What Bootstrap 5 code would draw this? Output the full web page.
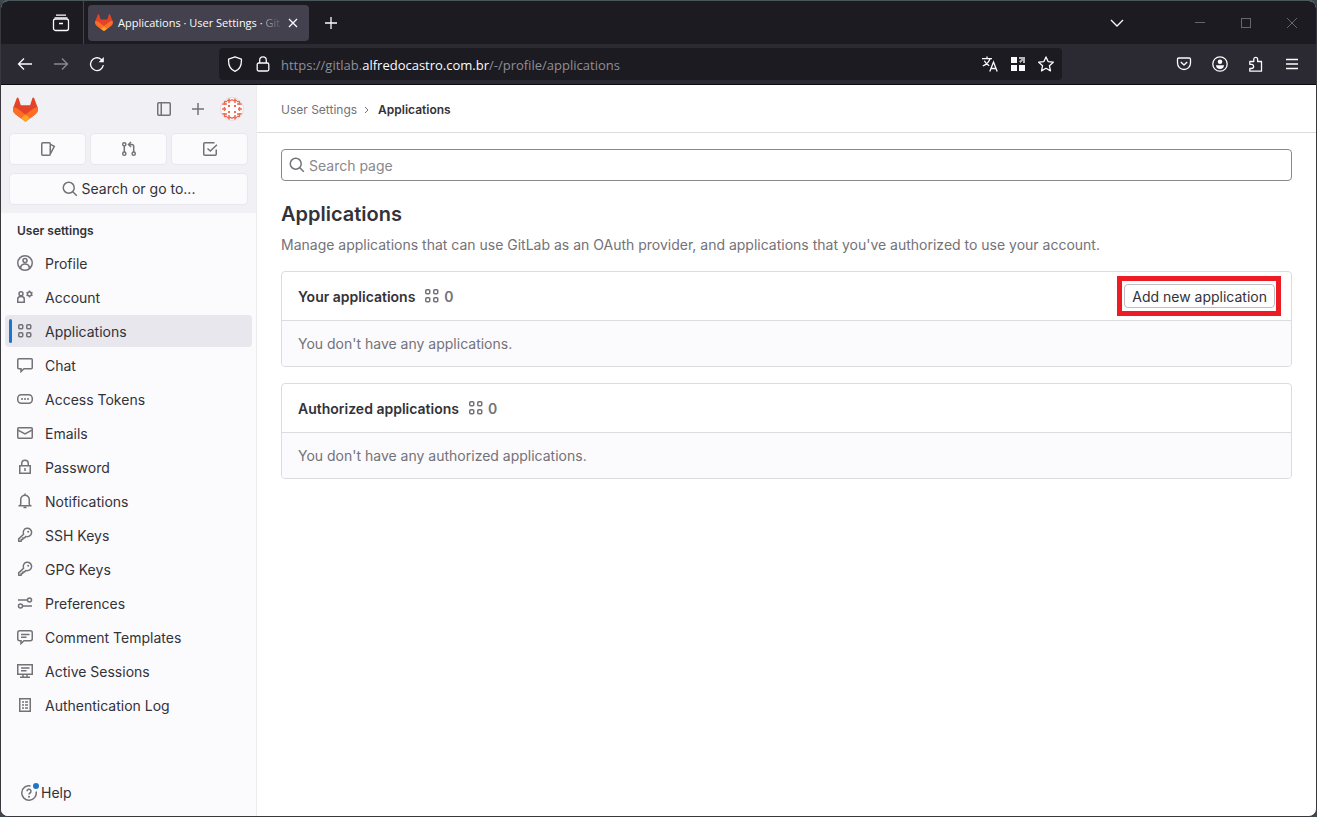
<!DOCTYPE html>
<html lang="en">
<head>
<meta charset="utf-8">
<meta name="viewport" content="width=device-width, initial-scale=1">
<title>Applications · User Settings · GitLab</title>
<link href="https://cdn.jsdelivr.net/npm/bootstrap@5.3.0/dist/css/bootstrap.min.css" rel="stylesheet">
<style>
  body { background: #3c4a50; font-family: Inter, "Liberation Sans", sans-serif; font-size: 14px; line-height: 20px; color: #333238; }
  svg { display: block; flex: none; fill: none; stroke: currentColor; stroke-width: 1.5; }
  button { font: inherit; color: inherit; }
  a { color: inherit; text-decoration: none; }
  .win { min-height: 100vh; border: 1px solid #38383d; border-top-color: #4a585c; border-radius: 8px; overflow: hidden; background: #fff; }

  .chrome-ui { font-family: "Open Sans", "Noto Sans", sans-serif; color: #fbfbfe; }
  .chrome-ui button { background: none; border: 0; padding: 0; }
  .chrome-ui svg { stroke-width: 1.3; }
  .tab-strip { height: 43px; background: #1c1b22; }
  .all-tabs { width: 83px; border-right: 1px solid #45444d; padding-left: 51px; }
  .page-tab { width: 221px; height: 36px; margin-left: 4px; padding: 0 11px 0 7px; background: #42414d; border-radius: 4px; font-size: 11px; }
  .tab-title { margin-left: 5px; white-space: nowrap; }
  .fade-end { background: linear-gradient(90deg, #b0afb6, #5c5b66); -webkit-background-clip: text; background-clip: text; color: transparent; }
  .win-ctl { gap: 30px; color: #67666e; }
  .win-ctl svg { stroke-width: 1; }
  .nav-strip { height: 41px; background: #2b2a33; border-bottom: 1px solid #0c0c0d; padding-left: 16px; padding-right: 16px; }
  .nav-left { width: 202px; gap: 20px; }
  .addr { width: 843px; height: 32px; background: #1c1b22; border-radius: 4px; padding: 0 8px; }
  .addr-text { font-size: 13px; color: #8f8f96; padding-top: 1px; margin-left: 6px; }
  .addr-text b { font-weight: 400; color: #fbfbfe; }

  .side { width: 256px; background: #fbfafd; border-right: 1px solid #ececef; }
  .side-top { background: #f1f0f4; padding: 8px; height: 128px; }
  .brand-row { height: 32px; }
  .ico { color: #737278; }
  .tile { height: 32px; background: #fbfafd; border: 1px solid #e8e7ed; border-radius: 4px; display: flex; align-items: center; justify-content: center; padding: 0; }
  .side-title { font-size: 12px; font-weight: 600; line-height: 16px; padding: 10px 16px 8px; }
  .side-nav { padding: 0 4px; display: grid; gap: 2px; list-style: none; margin: 0; }
  .side-nav a { height: 32px; display: flex; align-items: center; gap: 12px; padding: 0 12px; border-radius: 4px; }
  .side-nav a.active { background: #e8e7ed; padding-left: 4px; gap: 5px; }
  .side-nav a.active::before { content: ""; width: 3px; height: 24px; border-radius: 4px; background: #1f75cb; }
  .side-nav a span { padding-top: 2px; }
  .side-nav a.active span { padding-left: 7px; }
  .side-nav a svg { color: #737278; }

  .crumbs { height: 48px; border-bottom: 1px solid #dcdcde; padding: 2px 24px 0; font-size: 12px; }
  .crumbs b { font-weight: 600; }
  .crumbs svg { stroke-width: 1; margin: 0 9px 0 7px; }
  .work { padding: 16px 24px; }
  .page-search { height: 32px; border: 1px solid #89888d; border-radius: 4px; padding: 0 7px; gap: 4px; }
  .page-search input { border: 0; outline: 0; width: 100%; background: none; padding: 2px 0 0; }
  .page-search input::placeholder { color: #89888d; opacity: 1; }
  h1 { font-size: 20px; line-height: 24px; font-weight: 600; margin: 21px 0 9px; }
  .soft { color: #737278; }
  .panel { border: 1px solid #dcdcde; border-radius: 4px; margin-bottom: 16px; overflow: hidden; }
  .panel-head { height: 49px; padding: 0 10px 0 16px; border-bottom: 1px solid #dcdcde; }
  .panel-head h2 { font-size: 14px; line-height: 20px; font-weight: 600; margin: 0; padding-top: 2px; }
  .total { gap: 4px; margin-left: 9px; font-weight: 600; }
  .total span { padding-top: 2px; }
  .panel-body { background: #fbfafd; padding: 13px 16px 12px; }
  .callout-box { border: 5px solid #ed1c24; padding: 3px 1px 3px 2px; }
  .btn-add { height: 24px; border: 1px solid #bfbfc3; border-radius: 4px; background: #fff; padding: 2px 7px 0; line-height: 20px; display: block; }
  .help { padding: 0 20px 13px; }
  .help-dot { top: -2px; right: -2px; width: 6px; height: 6px; border-radius: 50%; background: #1f75cb; }
</style>
</head>
<body>
<svg width="0" height="0" class="position-absolute" aria-hidden="true">
  <symbol id="fox" viewBox="0 0 25 24"><g stroke="none"><path fill="#e24329" d="m24.5 9.5-.03-.09L21.08.56a.9.9 0 0 0-1.7.09l-2.29 7.01H7.83L5.54.65a.9.9 0 0 0-1.7-.09L.45 9.4l-.03.1a6.3 6.3 0 0 0 2.09 7.27l5.2 3.9 2.56 1.93 2.2 1.66 4.77-3.61 5.2-3.9A6.3 6.3 0 0 0 24.5 9.5Z"/><path fill="#fc6d26" d="m24.5 9.5-.03-.09a11.4 11.4 0 0 0-4.56 2.05l-7.45 5.63 4.75 3.58 5.2-3.9A6.3 6.3 0 0 0 24.5 9.5ZM.42 9.5l.03-.09a11.4 11.4 0 0 1 4.56 2.05l7.45 5.63-4.75 3.58-5.2-3.9A6.3 6.3 0 0 1 .42 9.5Z"/><path fill="#fca326" d="m7.7 20.67 4.77 3.59 4.74-3.59-4.75-3.58-4.76 3.58Z"/></g></symbol>
  <symbol id="apps" viewBox="0 0 16 16"><rect x="1.750" y="1.750" width="4" height="4" rx="1"/><rect x="9.750" y="1.750" width="4" height="4" rx="1"/><rect x="1.750" y="9.750" width="4" height="4" rx="1"/><rect x="9.750" y="9.750" width="4" height="4" rx="1"/></symbol>
  <symbol id="find" viewBox="0 0 16 16"><circle cx="6.750" cy="6.750" r="5.500"/><path d="m10.800 10.800 4 4"/></symbol>
  <symbol id="key" viewBox="0 0 16 16"><path d="M6.600 7.200A4.200 4.200 0 1 1 9 9.400L7.500 10.900H5.800v1.700H4.200v1.700H1.700v-2.400Z" stroke-linejoin="round"/><circle cx="11.200" cy="4.800" r="1" fill="currentColor" stroke="none"/></symbol>
</svg>

<div class="win d-flex flex-column">
  <header class="chrome-ui">
    <div class="tab-strip d-flex align-items-center">
      <div class="all-tabs align-self-stretch d-flex align-items-center">
        <button aria-label="Recent tabs"><svg width="18" height="18" viewBox="0 0 18 18"><path d="M4 1.200h10M2.500 3.800h13"/><rect x="1.500" y="5" width="15" height="11.500" rx="2"/><path d="M7 9.500h4"/></svg></button>
      </div>
      <div class="page-tab d-flex align-items-center">
        <svg width="18" height="17"><use href="#fox"/></svg>
        <span class="tab-title">Applications · User Settings · <span class="fade-end">Git</span></span>
        <button aria-label="Close tab" class="ms-auto"><svg width="10" height="10" viewBox="0 0 10 10"><path d="m1 1 8 8M9 1 1 9"/></svg></button>
      </div>
      <button aria-label="New tab" class="ms-3"><svg width="12" height="12" viewBox="0 0 12 12"><path d="M6 0v12M0 6h12"/></svg></button>
      <button aria-label="List all tabs" class="ms-auto"><svg width="14" height="8" viewBox="0 0 14 8"><path d="m1 1 6 6 6-6"/></svg></button>
      <div class="win-ctl d-flex align-items-center ms-5 ps-3 pe-3">
        <button aria-label="Minimize" class="ms-1"><svg width="16" height="10" viewBox="0 0 16 10"><path d="M3 4.500h10"/></svg></button>
        <button aria-label="Maximize"><svg width="16" height="10" viewBox="0 0 16 10"><rect x="3.500" y=".500" width="9" height="9"/></svg></button>
        <button aria-label="Close"><svg width="16" height="10" viewBox="0 0 16 10"><path d="m3 0 10 10M13 0 3 10"/></svg></button>
      </div>
    </div>
    <div class="nav-strip d-flex align-items-center">
      <div class="nav-left d-flex align-items-center">
        <button aria-label="Back"><svg width="16" height="16" viewBox="0 0 16 16"><path d="M15 8H1.500M7 2.500 1.500 8 7 13.500"/></svg></button>
        <button aria-label="Forward" disabled><svg width="16" height="16" viewBox="0 0 16 16" opacity=".45"><path d="M1 8h13.500M9 2.500 14.500 8 9 13.500"/></svg></button>
        <button aria-label="Reload"><svg width="16" height="16" viewBox="0 0 16 16"><path d="M14.300 9A6.400 6.400 0 1 1 12 3.200L13.500 4.700"/><path d="M14.800 1v5.200H9.600Z" fill="currentColor" stroke="none"/></svg></button>
      </div>
      <div class="addr d-flex align-items-center">
        <button aria-label="Tracking protection"><svg width="16" height="16" viewBox="0 0 16 16"><path d="M8 .800 14.400 3.200C14.800 9 12 13.600 8 15.300 4 13.600 1.200 9 1.600 3.200Z" stroke-linejoin="round"/></svg></button>
        <button aria-label="Connection secure" class="ms-2 px-1"><svg width="16" height="16" viewBox="0 0 16 16"><rect x="2.200" y="7" width="11.600" height="8" rx="1.500"/><path d="M4.700 7V4.200a3.300 3.300 0 0 1 6.600 0V7"/></svg></button>
        <a class="addr-text text-nowrap" href="#">https://gitlab.<b>alfredocastro.com.br</b>/-/profile/applications</a>
        <div class="d-flex gap-2 ms-auto">
          <button aria-label="Translate" class="pe-1"><svg width="16" height="16" viewBox="0 0 16 16"><path d="M0 2.700h10M5 .500v2.200M8 2.700C7 6 4 8.500.800 10M2.300 4.800c1.200 2.400 3 3.800 4.900 5M7.800 15.500l3.700-9.500 3.700 9.500M9 12.500h5"/></svg></button>
          <button aria-label="Containers" class="pe-1"><svg width="16" height="16" viewBox="0 0 16 16"><path d="M1 1h6v6H1zM1 9h6v6H1zM9 9h6v6H9z" fill="currentColor" stroke="none"/><path d="M9 1h6v6h-2V4.500L10.500 7 9 5.500 11.500 3H9z" fill="#b5b5ba" stroke="none"/></svg></button>
          <button aria-label="Bookmark"><svg width="16" height="16" viewBox="0 0 16 16"><path d="m8 .900 2.100 4.700 5.200.600-3.900 3.500 1.100 5.200L8 12.300l-4.500 2.600 1.100-5.200L.700 6.200l5.200-.600Z" stroke-linejoin="round"/></svg></button>
        </div>
      </div>
      <div class="d-flex align-items-center gap-3 ms-auto">
        <button aria-label="Pocket" class="pe-1"><svg width="16" height="16" viewBox="0 0 16 16"><path d="M2.800 2h10.400q1.300 0 1.300 1.300V7a6.500 6.500 0 0 1-13 0V3.300Q1.500 2 2.800 2ZM4.800 6 8 9l3.200-3" stroke-linejoin="round"/></svg></button>
        <button aria-label="Account" class="pe-1"><svg width="16" height="16" viewBox="0 0 16 16"><circle cx="8" cy="8" r="7.200"/><circle cx="8" cy="5.800" r="2.300" fill="currentColor" stroke="none"/><path d="M4 9.200h8c0 2-1.600 3.800-4 3.800s-4-1.800-4-3.800Z" fill="currentColor" stroke="none"/></svg></button>
        <button aria-label="Extensions" class="pe-1"><svg width="16" height="16" viewBox="0 0 16 16"><path d="M1.800 8.300V5.500H5.800V3.200a1.900 1.900 0 0 1 3.800 0v2.300h3.900v9.700H1.800v-2.700H3.500a2.100 2.100 0 0 0 0-4.200Z" stroke-linejoin="round"/></svg></button>
        <button aria-label="Menu"><svg width="16" height="16" viewBox="0 0 16 16"><path d="M2 3.500h12M2 8h12M2 12.500h12"/></svg></button>
      </div>
    </div>
  </header>

  <div class="d-flex flex-grow-1">
    <aside class="side d-flex flex-column flex-shrink-0">
      <div class="side-top">
        <div class="brand-row d-flex align-items-center px-1 mb-2">
          <a href="#" aria-label="Homepage"><svg width="25" height="25"><use href="#fox"/></svg></a>
          <div class="d-flex align-items-center ms-auto gap-3 ico">
            <button class="btn p-0 border-0 ico me-1" aria-label="Collapse sidebar"><svg width="16" height="16" viewBox="0 0 16 16"><rect x="1.750" y="1.750" width="12.500" height="12.500" rx="1"/><path d="M5.250 2v12"/></svg></button>
            <button class="btn p-0 border-0 ico" aria-label="Create new"><svg width="12" height="12" viewBox="0 0 12 12"><path d="M6 0v12M0 6h12"/></svg></button>
            <a href="#" aria-label="User menu"><svg width="24" height="24" viewBox="0 0 24 24"><defs><clipPath id="av"><circle cx="12" cy="12" r="11.500"/></clipPath></defs><g clip-path="url(#av)"><path fill="#fff" stroke="none" d="M0 0h24v24H0z"/><path stroke="#ee6a50" stroke-width="1.500" d="M4.500 5v3M4.500 10v4M4.500 16v3M19.500 5v3M19.500 10v4M19.500 16v3M9 1v5M15 1v5M9 18v5M15 18v5M12 2v2M12 20v2M2 7h5M2 12h4M2 17h5M17 7h5M18 12h4M17 17h5M7 3.500h4M13 3.500h4M7 20.500h4M13 20.500h4M4 4.500h3M17 4.500h3M4 19.500h3M17 19.500h3"/><path fill="#ee6a50" stroke="none" d="M8 8h2v2H8zM14 8h2v2h-2zM8 14h2v2H8zM14 14h2v2h-2z"/></g><circle cx="12" cy="12" r="11.500" stroke="#dddce2" stroke-width="1"/></svg></a>
          </div>
        </div>
        <div class="row g-0 gap-1 flex-nowrap mb-2">
          <div class="col"><a class="tile ico" href="#" aria-label="Issues"><svg width="16" height="16" viewBox="0 0 16 16"><rect x="1.750" y="1.750" width="8.500" height="12.500" rx="1"/><path d="m10.500 3.300 3.800 2-3.800 7.400"/></svg></a></div>
          <div class="col"><a class="tile ico" href="#" aria-label="Merge requests"><svg width="16" height="16" viewBox="0 0 16 16"><circle cx="3.300" cy="3.300" r="1.600"/><circle cx="3.300" cy="12.700" r="1.600"/><circle cx="12.700" cy="12.700" r="1.600"/><path d="M3.300 5v6M12.700 11V5.500q0-2-2-2H8M10 1 7.500 3.500 10 6"/></svg></a></div>
          <div class="col"><a class="tile ico" href="#" aria-label="To-Do List"><svg width="16" height="16" viewBox="0 0 16 16"><path d="M12.500 1.750H2.750q-1 0-1 1v10.500q0 1 1 1h10.500q1 0 1-1V8.500M5.500 7.500 8.300 10l6.700-6.200"/></svg></a></div>
        </div>
        <button class="tile w-100 gap-1"><svg class="ico" width="16" height="16"><use href="#find"/></svg>Search or go to...</button>
      </div>
      <div class="side-title">User settings</div>
      <ul class="side-nav">
        <li><a href="#"><svg width="16" height="16" viewBox="0 0 16 16"><circle cx="8" cy="8" r="7.250"/><circle cx="8" cy="5.500" r="2"/><path d="M3.700 13.500v-1.500q.800-3 4.300-3t4.300 3v1.500"/></svg><span>Profile</span></a></li>
        <li><a href="#"><svg width="16" height="16" viewBox="0 0 16 16"><circle cx="4" cy="4.800" r="2"/><path d="M.750 13.250V10Q.750 7.500 4 7.500T7.250 10v3.250Z"/><circle cx="12.500" cy="5" r="2"/><path d="M12.500 1.500v1.500M12.500 7v1.500M9.500 3.300l1.300.700M14.200 6l1.300.700M9.500 6.700l1.300-.700M14.200 4l1.300-.700"/></svg><span>Account</span></a></li>
        <li><a href="#" class="active" aria-current="page"><svg width="16" height="16"><use href="#apps"/></svg><span>Applications</span></a></li>
        <li><a href="#"><svg width="16" height="16" viewBox="0 0 16 16"><path d="M1.750 1.750h12.500q1 0 1 1v8q0 1-1 1H7l-3 2.800v-2.800H1.750q-1 0-1-1v-8q0-1 1-1Z"/></svg><span>Chat</span></a></li>
        <li><a href="#"><svg width="16" height="16" viewBox="0 0 16 16"><rect x=".750" y="3.750" width="14.500" height="8.500" rx="3.500"/><path d="M4 8h2M7 8h2M10 8h2"/></svg><span>Access Tokens</span></a></li>
        <li><a href="#"><svg width="16" height="16" viewBox="0 0 16 16"><rect x=".750" y="2.750" width="14.500" height="10.500" rx="1"/><path d="M1 5.200 8 9l7-3.800"/></svg><span>Emails</span></a></li>
        <li><a href="#"><svg width="16" height="16" viewBox="0 0 16 16"><rect x="2.750" y="6.750" width="10.500" height="7.500"/><path d="M4.750 6.500V4.500a3.250 3.250 0 0 1 6.500 0v2M8 9v3"/></svg><span>Password</span></a></li>
        <li><a href="#"><svg width="16" height="16" viewBox="0 0 16 16"><path d="M1.500 12.750h13M3 12.500l.750-1.500V6.500a4.250 4.250 0 0 1 8.500 0V11l.750 1.500M8 .500V2M6.500 14.500h3"/></svg><span>Notifications</span></a></li>
        <li><a href="#"><svg width="16" height="16"><use href="#key"/></svg><span>SSH Keys</span></a></li>
        <li><a href="#"><svg width="16" height="16"><use href="#key"/></svg><span>GPG Keys</span></a></li>
        <li><a href="#"><svg width="16" height="16" viewBox="0 0 16 16"><circle cx="12.500" cy="5" r="2"/><circle cx="3.500" cy="11" r="2"/><path d="M1 5h9.500M5.500 11H15"/></svg><span>Preferences</span></a></li>
        <li><a href="#"><svg width="16" height="16" viewBox="0 0 16 16"><path d="M2.750 1.750h10.500q2 0 2 2v6q0 2-2 2H7l-3 2.800v-2.800H2.750q-2 0-2-2v-6q0-2 2-2ZM4 5.500h8.500M4 8.200h5.500"/></svg><span>Comment Templates</span></a></li>
        <li><a href="#"><svg width="16" height="16" viewBox="0 0 16 16"><path d="M.750 1.750h14.500v9.500H.750ZM4 5h8.500M4 7.800h5.500M3 14.250h10M6 11.500v2.500M10 11.500v2.500"/></svg><span>Active Sessions</span></a></li>
        <li><a href="#"><svg width="16" height="16" viewBox="0 0 16 16"><path d="M2.750 1.750h10.500v12.500H2.750ZM5 5h2M8 5h3M5 8h2M8 8h3M5 11h2M8 11h3"/></svg><span>Authentication Log</span></a></li>
      </ul>
      <a class="help d-flex align-items-center gap-1 mt-auto" href="#">
        <span class="position-relative ico"><svg width="16" height="16" viewBox="0 0 16 16"><path d="M9.500 .900A7.250 7.250 0 1 0 15.100 6.500"/><path d="M6 6.300a2 2 0 1 1 3 1.700q-1 .600-1 1.500"/><circle cx="8" cy="11.700" r="1" fill="currentColor" stroke="none"/></svg><span class="help-dot position-absolute"></span></span>Help
      </a>
    </aside>

    <main class="flex-grow-1">
      <nav class="crumbs d-flex align-items-center" aria-label="Breadcrumb">
        <a class="soft" href="#">User Settings</a>
        <svg class="ico" width="5" height="8" viewBox="0 0 5 8"><path d="m1 1 3 3-3 3"/></svg>
        <b>Applications</b>
      </nav>
      <div class="work">
        <label class="page-search d-flex align-items-center"><svg class="ico" width="16" height="16"><use href="#find"/></svg><input type="search" placeholder="Search page" aria-label="Search page"></label>
        <h1>Applications</h1>
        <p class="soft mb-3">Manage applications that can use GitLab as an OAuth provider, and applications that you've authorized to use your account.</p>
        <section class="panel">
          <div class="panel-head d-flex align-items-center">
            <h2>Your applications</h2>
            <div class="total soft d-flex align-items-center"><svg width="16" height="16"><use href="#apps"/></svg><span>0</span></div>
            <div class="callout-box ms-auto"><button class="btn-add">Add new application</button></div>
          </div>
          <div class="panel-body soft">You don't have any applications.</div>
        </section>
        <section class="panel">
          <div class="panel-head d-flex align-items-center">
            <h2>Authorized applications</h2>
            <div class="total soft d-flex align-items-center"><svg width="16" height="16"><use href="#apps"/></svg><span>0</span></div>
          </div>
          <div class="panel-body soft">You don't have any authorized applications.</div>
        </section>
      </div>
    </main>
  </div>
</div>
<script src="https://cdn.jsdelivr.net/npm/bootstrap@5.3.0/dist/js/bootstrap.bundle.min.js"></script>
</body>
</html>
